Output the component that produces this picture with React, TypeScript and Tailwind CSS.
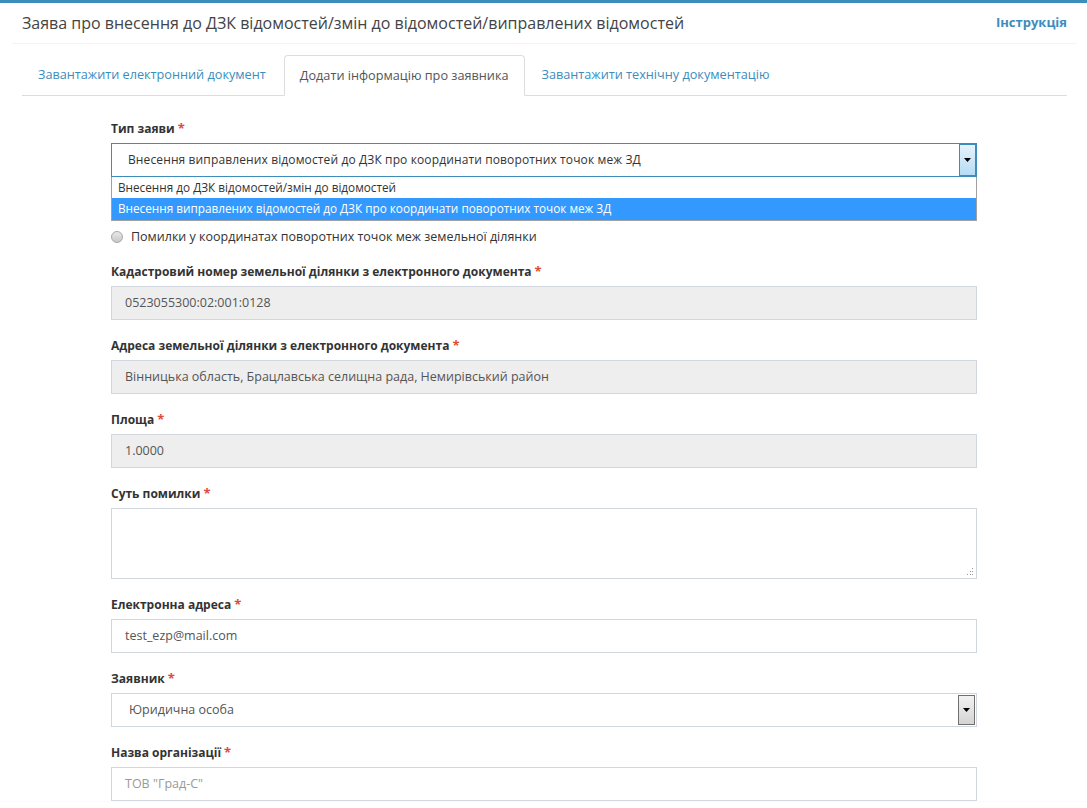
import React from "react";

const font = { fontFamily: "'Open Sans', 'Noto Sans', sans-serif" };

function Label({ children }: { children: React.ReactNode }) {
  return (
    <div className="mb-[5px] h-[20px] text-[12px] font-bold leading-[20px] text-[#333]">
      {children}
      <span className="ml-[3px] text-[13px] text-[#dd4b39]">*</span>
    </div>
  );
}

function Field({ value, disabled, muted }: { value: string; disabled?: boolean; muted?: boolean }) {
  return (
    <div
      className={`flex h-[34px] items-center border border-[#d2d6de] px-[13px] text-[12.5px] ${
        disabled ? "bg-[#eee]" : "bg-white"
      } ${muted ? "text-[#999]" : "text-[#555]"}`}
    >
      {value}
    </div>
  );
}

function ArrowButton({ active }: { active?: boolean }) {
  return (
    <div
      className={`flex h-full w-[17px] flex-col border ${
        active ? "border-[#3c8dbc] bg-gradient-to-b from-[#e6f3fb] to-[#b5dcf5]" : "border-[#707070] bg-gradient-to-b from-[#f2f2f2] to-[#d4d4d4]"
      }`}
    >
      <div className="flex flex-1 items-center justify-center">
        <svg width="7" height="4" viewBox="0 0 7 4">
          <path d="M0 0h7L3.5 4z" fill="#000" />
        </svg>
      </div>
    </div>
  );
}

export default function App() {
  return (
    <div className="min-h-screen bg-white" style={font}>
      <div className="border-t-[3px] border-[#3c8dbc] shadow-[-1px_0_1px_rgba(0,0,0,0.1)]">
        <div className="ml-[12px] mr-[10px] flex h-[41px] items-center justify-between border-b border-[#f4f4f4] pl-[10px] pr-[10px]">
          <h1 className="text-[16px] text-[#444]">
            Заява про внесення до ДЗК відомостей/змін до відомостей/виправлених відомостей
          </h1>
          <a className="text-[13px] font-bold text-[#3c8dbc]">Інструкція</a>
        </div>

        <div className="ml-[22px] mr-[20px] mt-[11px] flex border-b border-[#ddd]">
          <div className="-mb-px mr-[2px] flex h-[40px] items-center px-[16px] text-[12.7px] text-[#3c8dbc]">
            Завантажити електронний документ
          </div>
          <div className="-mb-px mr-[2px] flex h-[41px] items-center rounded-t-[4px] border border-b-white border-[#ddd] bg-white px-[15px] text-[12.7px] text-[#555]">
            Додати інформацію про заявника
          </div>
          <div className="-mb-px flex h-[40px] items-center px-[15px] text-[12.7px] text-[#3c8dbc]">
            Завантажити технічну документацію
          </div>
        </div>

        <div className="ml-[111px] mr-[110px] pt-[22px]">
          <Label>Тип заяви</Label>
          <div className="flex h-[34px] border border-[#3c8dbc] bg-white">
            <div className="flex flex-1 items-center pl-[16px] text-[12px] tracking-[0.12px] text-[#333]">
              Внесення виправлених відомостей до ДЗК про координати поворотних точок меж ЗД
            </div>
            <ArrowButton active />
          </div>
          <div className="border border-t-0 border-[#a0a0a0] text-[11.75px]">
            <div className="flex h-[21px] items-center px-[6px] text-[#333]">
              Внесення до ДЗК відомостей/змін до відомостей
            </div>
            <div className="flex h-[22px] items-center bg-[#3399ff] px-[6px] text-white">
              Внесення виправлених відомостей до ДЗК про координати поворотних точок меж ЗД
            </div>
          </div>

          <div className="mt-[8px] flex h-[16px] items-center gap-[8px] text-[12.5px] text-[#333]">
            <span className="h-[12px] w-[12px] rounded-full border border-[#a8a8a8] bg-gradient-to-b from-[#e8e8e8] to-[#c8c8c8]" />
            Помилки у координатах поворотних точок меж земельної ділянки
          </div>

          <div className="mt-[16px]">
            <Label>Кадастровий номер земельної ділянки з електронного документа</Label>
            <Field value="0523055300:02:001:0128" disabled />
          </div>

          <div className="mt-[15px]">
            <Label>Адреса земельної ділянки з електронного документа</Label>
            <Field value="Вінницька область, Брацлавська селищна рада, Немирівський район" disabled />
          </div>

          <div className="mt-[15px]">
            <Label>Площа</Label>
            <Field value="1.0000" disabled />
          </div>

          <div className="mt-[15px]">
            <Label>Суть помилки</Label>
            <div className="relative h-[71px] border border-[#d2d6de] bg-white">
              <svg className="absolute bottom-[2px] right-[2px]" width="8" height="8" viewBox="0 0 8 8">
                <g fill="#999">
                  <rect x="6" y="0" width="1" height="1" />
                  <rect x="4" y="3" width="1" height="1" />
                  <rect x="6" y="3" width="1" height="1" />
                  <rect x="1" y="6" width="1" height="1" />
                  <rect x="4" y="6" width="1" height="1" />
                  <rect x="6" y="6" width="1" height="1" />
                </g>
              </svg>
            </div>
          </div>

          <div className="mt-[15px]">
            <Label>Електронна адреса</Label>
            <Field value="test_ezp@mail.com" />
          </div>

          <div className="mt-[15px]">
            <Label>Заявник</Label>
            <div className="flex h-[34px] border border-[#d2d6de] bg-white">
              <div className="flex flex-1 items-center pl-[17px] text-[12.5px] text-[#555]">Юридична особа</div>
              <div className="py-px pr-px">
                <ArrowButton />
              </div>
            </div>
          </div>

          <div className="mt-[15px]">
            <Label>Назва організації</Label>
            <Field value={'ТОВ "Град-С"'} muted />
          </div>
        </div>
      </div>
    </div>
  );
}
